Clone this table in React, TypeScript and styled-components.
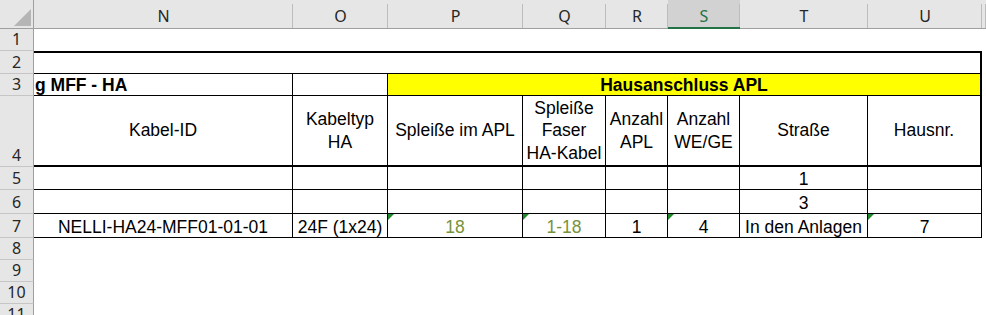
import React from "react";
import styled, { createGlobalStyle } from "styled-components";

const GlobalStyle = createGlobalStyle`
  html, body {
    margin: 0;
    padding: 0;
    background: #ffffff;
    overflow: hidden;
  }
  #root {
    width: 986px;
    height: 315px;
    overflow: hidden;
  }
`;

type Column = { id: string; width: number; selected?: boolean };

const COLUMNS: Column[] = [
  { id: "N", width: 259 },
  { id: "O", width: 95 },
  { id: "P", width: 135 },
  { id: "Q", width: 83 },
  { id: "R", width: 62 },
  { id: "S", width: 72, selected: true },
  { id: "T", width: 128 },
  { id: "U", width: 114 },
];

// Heights of rows 1..11; the window cuts row 11 at its bottom edge.
const ROW_HEIGHTS = [22, 23, 22, 71, 23, 24, 24, 22, 22, 22, 22];

const HEADER_BG = "#e6e6e6";
const HEADER_EDGE = "#9f9f9f";
const HEADER_SEP = "#bcbcbc";
const UI_FONT = `"Noto Sans", "Open Sans", sans-serif`;

const Sheet = styled.div`
  display: grid;
  grid-template-columns: 34px ${COLUMNS.map((c) => `${c.width}px`).join(" ")} 1fr;
  grid-template-rows: 29px ${ROW_HEIGHTS.map((h) => `${h}px`).join(" ")};
  width: 986px;
  font-family: "Liberation Sans", Arial, sans-serif;
  color: #000;
  background: #fff;
`;

const Corner = styled.div`
  box-sizing: border-box;
  background: ${HEADER_BG};
  border-right: 1px solid ${HEADER_EDGE};
  border-bottom: 1px solid ${HEADER_EDGE};
  display: flex;
  align-items: flex-end;
  justify-content: flex-end;
  padding: 0 2px 2px 0;
`;

const CornerMark = styled.svg`
  display: block;
  width: 17px;
  height: 17px;
`;

const ColHead = styled.div<{ $selected?: boolean }>`
  box-sizing: border-box;
  background-color: ${(p) => (p.$selected ? "#d2d2d2" : HEADER_BG)};
  background-image: linear-gradient(${HEADER_SEP}, ${HEADER_SEP});
  background-size: 1px calc(100% - 4px);
  background-position: right bottom;
  background-repeat: no-repeat;
  border-bottom: ${(p) => (p.$selected ? "2px solid #217346" : `1px solid ${HEADER_EDGE}`)};
  display: flex;
  align-items: center;
  justify-content: center;
  padding-top: ${(p) => (p.$selected ? "5px" : "4px")};
  font-family: ${UI_FONT};
  font-size: 16px;
  line-height: 20px;
  color: ${(p) => (p.$selected ? "#217346" : "#262626")};
`;

const RowHead = styled.div`
  box-sizing: border-box;
  background: ${HEADER_BG};
  border-right: 1px solid ${HEADER_EDGE};
  border-bottom: 1px solid #c6c6c6;
  display: flex;
  align-items: flex-end;
  justify-content: center;
  padding-bottom: 1px;
  font-family: ${UI_FONT};
  font-size: 16px;
  line-height: 20px;
  color: #262626;
  overflow: hidden;
`;

const Blank = styled.div<{ $span?: number }>`
  grid-column: span ${(p) => p.$span ?? 1};
  background: #fff;
`;

type CellProps = {
  $span?: number;
  $top?: number;
  $right?: number;
  $bottom?: number;
  $fill?: string;
  $bold?: boolean;
  $left?: boolean;
  $tint?: string;
};

const line = (w?: number) => (w ? `${w}px solid #000` : "none");

const Cell = styled.div<CellProps>`
  grid-column: span ${(p) => p.$span ?? 1};
  position: relative;
  box-sizing: border-box;
  border-top: ${(p) => line(p.$top)};
  border-right: ${(p) => line(p.$right)};
  border-bottom: ${(p) => line(p.$bottom)};
  background: ${(p) => p.$fill ?? "#fff"};
  display: flex;
  align-items: flex-end;
  justify-content: ${(p) => (p.$left ? "flex-start" : "center")};
  padding: 0 ${(p) => (p.$left ? "0 0 1px" : "2px 0")};
  font-size: 17.5px;
  line-height: 20px;
  font-weight: ${(p) => (p.$bold ? 700 : 400)};
  color: ${(p) => p.$tint ?? "#000"};
  white-space: nowrap;
  overflow: hidden;
`;

const HeadCell = styled(Cell)`
  align-items: center;
  text-align: center;
  white-space: normal;
  line-height: 22.5px;
  padding: 0 1px;
`;

// Excel's "number stored as text" marker in the top-left corner of a cell.
const Flag = styled.span`
  position: absolute;
  top: 0;
  left: 0;
  width: 0;
  height: 0;
  border-top: 6px solid #1f8a2c;
  border-right: 6px solid transparent;
`;

const OLIVE = "#76923c";

type DataRow = {
  values: string[];
  flags?: boolean[];
  tints?: (string | undefined)[];
};

const DATA_ROWS: DataRow[] = [
  { values: ["", "", "", "", "", "", "1", ""] },
  { values: ["", "", "", "", "", "", "3", ""] },
  {
    values: ["NELLI-HA24-MFF01-01-01", "24F (1x24)", "18", "1-18", "1", "4", "In den Anlagen", "7"],
    flags: [false, false, true, true, false, true, false, true],
    tints: [undefined, undefined, OLIVE, OLIVE],
  },
];

const HEADINGS: React.ReactNode[] = [
  "Kabel-ID",
  <>Kabeltyp<br />HA</>,
  "Spleiße im APL",
  <>Spleiße<br />Faser<br />HA-Kabel</>,
  <>Anzahl<br />APL</>,
  <>Anzahl<br />WE/GE</>,
  "Straße",
  "Hausnr.",
];

const EmptyRow: React.FC<{ n: number }> = ({ n }) => (
  <>
    <RowHead>{n}</RowHead>
    <Blank $span={COLUMNS.length + 1} />
  </>
);

export default function App() {
  const last = COLUMNS.length - 1;
  return (
    <>
      <GlobalStyle />
      <Sheet>
        <Corner>
          <CornerMark viewBox="0 0 17 17">
            <polygon points="17,0 17,17 0,17" fill="#b5b5b5" />
          </CornerMark>
        </Corner>
        {COLUMNS.map((c) => (
          <ColHead key={c.id} $selected={c.selected}>
            {c.id}
          </ColHead>
        ))}
        <ColHead />

        <EmptyRow n={1} />

        <RowHead>2</RowHead>
        <Cell $span={COLUMNS.length} $top={2} $right={2} $bottom={1} />
        <Blank />

        <RowHead>3</RowHead>
        <Cell $right={1} $bottom={1} $bold $left>
          g MFF - HA
        </Cell>
        <Cell $right={1} $bottom={1} />
        <Cell $span={6} $right={2} $bottom={1} $fill="#ffff00" $bold>
          Hausanschluss APL
        </Cell>
        <Blank />

        <RowHead>4</RowHead>
        {HEADINGS.map((h, i) => (
          <HeadCell key={i} $right={i === last ? 2 : 1} $bottom={2}>
            <span>{h}</span>
          </HeadCell>
        ))}
        <Blank />

        {DATA_ROWS.map((row, r) => (
          <React.Fragment key={r}>
            <RowHead>{r + 5}</RowHead>
            {row.values.map((v, i) => (
              <Cell key={i} $right={1} $bottom={1} $tint={row.tints?.[i]}>
                {row.flags?.[i] && <Flag />}
                {v}
              </Cell>
            ))}
            <Blank />
          </React.Fragment>
        ))}

        <EmptyRow n={8} />
        <EmptyRow n={9} />
        <EmptyRow n={10} />
        <EmptyRow n={11} />
      </Sheet>
    </>
  );
}
